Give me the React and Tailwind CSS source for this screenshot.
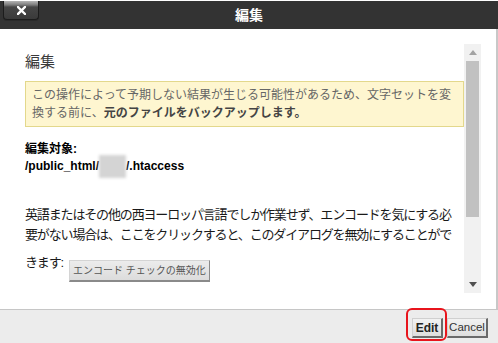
const FONT = "font-['Liberation_Sans','Noto_Sans_CJK_JP',sans-serif]";

function CloseButton() {
  return (
    <div className="absolute left-[3px] top-0 w-[36px] h-[19px] rounded-b-[4px] border border-t-0 border-[#1c1c1c] bg-[linear-gradient(to_bottom,#b4b4b4_0px,#7a7a7a_4px,#464646_6px,#3a3a3a_100%)] flex items-center justify-center shadow-[0_1px_0_#2a2a2a]">
      <svg width="9" height="9" viewBox="0 0 9 9">
        <path d="M1 1 L8 8 M8 1 L1 8" stroke="#fff" strokeWidth="2.4" strokeLinecap="square" />
      </svg>
    </div>
  );
}

function ScrollBar() {
  return (
    <div className="w-[17px] h-full bg-[#f1f1f1] flex flex-col">
      <div className="h-[17px] flex items-center justify-center">
        <svg width="8" height="5" viewBox="0 0 8 5">
          <path d="M4 0 L8 5 L0 5 Z" fill="#a3a3a3" />
        </svg>
      </div>
      <div className="ml-[2px] w-[13px] h-[156px] bg-[#c1c1c1]" />
      <div className="flex-1" />
      <div className="h-[17px] flex items-center justify-center">
        <svg width="8" height="5" viewBox="0 0 8 5">
          <path d="M0 0 L8 0 L4 5 Z" fill="#505050" />
        </svg>
      </div>
    </div>
  );
}

export default function App() {
  return (
    <div className={`w-[498px] h-[343px] overflow-hidden bg-white border-t border-white flex flex-col ${FONT}`}>
      <div className="relative h-[28px] bg-[#333333] flex items-center justify-center">
        <CloseButton />
        <span className="text-white font-bold text-[14px] leading-none">編集</span>
      </div>

      <div className="h-[280px] flex">
        <div className="w-[496px] pt-[15px]">
          <div className="w-[481px] h-[249px] flex">
            <div className="flex-1 overflow-hidden pl-[25px] pt-[8px]">
              <h2 className="text-[15px] leading-[20px] text-[#3a3a3a]">編集</h2>

              <div className="mt-[9px] border border-[#e3d88c] bg-[#fef6d0] pl-[6px] pt-[4px] pb-[4px] text-[12px] leading-[18px] text-[#666] whitespace-nowrap">
                <div>この操作によって予期しない結果が生じる可能性があるため、文字セットを変</div>
                <div>
                  換する前に、<b className="text-[#444]">元のファイルをバックアップします。</b>
                </div>
              </div>

              <div className="mt-[14px] text-[12px] leading-[17px] font-bold text-black">
                <div>編集対象:</div>
                <div className="whitespace-nowrap">
                  /public_html/
                  <span className="inline-block align-middle w-[27px] h-[23px] -my-[3px] bg-[#d4d4d4] blur-[1.5px]" />
                  /.htaccess
                </div>
              </div>

              <div className="mt-[30px] text-[13px] tracking-[-1.15px] leading-[20px] text-[#1a1a1a] whitespace-nowrap">
                <div>英語またはその他の西ヨーロッパ言語でしか作業せず、エンコードを気にする必</div>
                <div>要がない場合は、ここをクリックすると、このダイアログを無効にすることがで</div>
              </div>
              <div className="mt-[8px] flex items-start">
                <span className="text-[13px] tracking-[-1.15px] leading-[20px] text-[#1a1a1a]">きます:</span>
                <button className="ml-[6px] mt-[7px] h-[22px] px-[3px] flex items-center bg-[linear-gradient(to_bottom,#ececec,#dcdcdc)] border border-t-[#d4d4d4] border-l-[#d4d4d4] border-r-[#8a8a8a] border-b-[2px] border-b-[#8a8a8a] text-[10px] leading-none text-[#555] whitespace-nowrap">
                  エンコード チェックの無効化
                </button>
              </div>
            </div>
            <ScrollBar />
          </div>
        </div>
        <div className="w-[2px] bg-[#c8c8c8]" />
      </div>

      <div className="flex-1 border-t border-[#c6c6c6] bg-[#ececec] flex justify-end items-start pt-[8px] pr-[10px] gap-[4px]">
        <div className="relative">
          <button className="h-[20px] w-[31px] flex items-center justify-center bg-[linear-gradient(to_bottom,#f2f2f2,#dedede)] border border-t-[#d0d0d0] border-l-[#d0d0d0] border-r-[2px] border-r-[#6a6a6a] border-b-[2px] border-b-[#6a6a6a] text-[12px] font-bold leading-none text-[#222]">
            Edit
          </button>
          <div className="absolute -top-[10px] -bottom-[3px] -left-[6px] -right-[4px] border-2 border-[#e8141c] rounded-[6px]" />
        </div>
        <button className="h-[20px] w-[41px] flex items-center justify-center bg-[linear-gradient(to_bottom,#f2f2f2,#dedede)] border border-t-[#d0d0d0] border-l-[#d0d0d0] border-r-[2px] border-r-[#6a6a6a] border-b-[2px] border-b-[#6a6a6a] text-[11.5px] leading-none text-[#333]">
          Cancel
        </button>
      </div>
    </div>
  );
}
